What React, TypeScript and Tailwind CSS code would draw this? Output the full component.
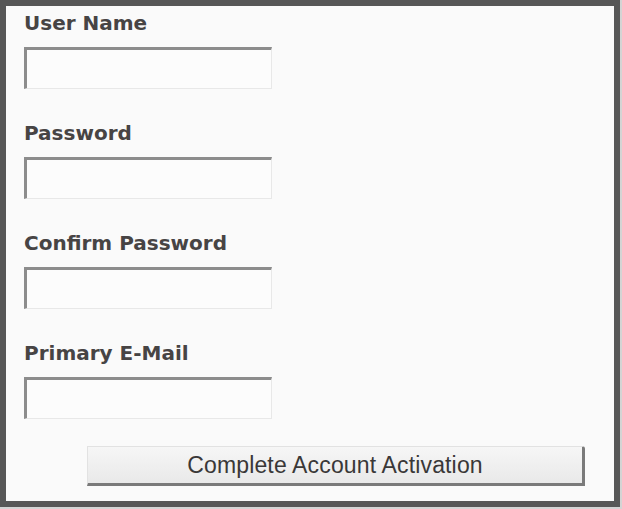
import React from 'react'

const fields = [
  { label: 'User Name', type: 'text' },
  { label: 'Password', type: 'password' },
  { label: 'Confirm Password', type: 'password' },
  { label: 'Primary E-Mail', type: 'text' },
]

export default function App() {
  return (
    <div className="w-[622px] h-[509px] bg-[#d4d4d4] pr-[2px] pb-[2px]">
      <div className="w-[620px] h-[507px] border-[6px] border-[#575757] bg-[#fafafa] pl-[18px] pt-[6px] flex flex-col">
        {fields.map((field, i) => (
          <div key={field.label} className={i < fields.length - 1 ? 'mb-[33px]' : ''}>
            <label className="block font-['DejaVu_Sans',Verdana,sans-serif] text-[20px] leading-[22px] font-bold text-[#474444]">
              {field.label}
            </label>
            <input
              type={field.type}
              className="block mt-[13px] w-[248px] h-[42px] bg-[#fcfcfc] border-t-[3px] border-l-[3px] border-r border-b border-t-[#8c8c8c] border-l-[#8c8c8c] border-r-[#e8e8e8] border-b-[#e8e8e8] outline-none"
            />
          </div>
        ))}
        <button
          type="button"
          className="mt-[27px] ml-[63px] w-[498px] h-[40px] bg-gradient-to-b from-[#f6f6f6] to-[#e9e9e9] border-t border-l border-t-[#e2e2e2] border-l-[#e2e2e2] border-r-[3px] border-b-[3px] border-r-[#7a7a7a] border-b-[#7a7a7a] rounded-tr-[3px] font-['Liberation_Sans',Arial,sans-serif] text-[23px] leading-[23px] tracking-[0.15px] text-[#3a3838]"
        >
          Complete Account Activation
        </button>
      </div>
    </div>
  )
}
